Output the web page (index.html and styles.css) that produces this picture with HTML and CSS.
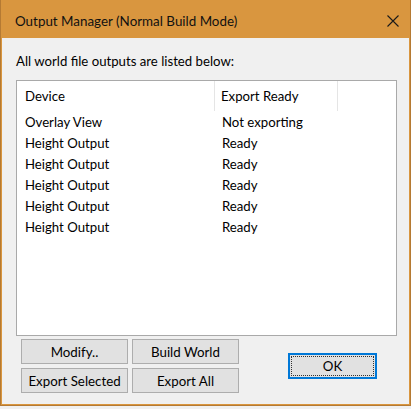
FILE: index.html
```html
<!DOCTYPE html>
<html>
<head>
<meta charset="utf-8">
<link rel="stylesheet" href="styles.css">
</head>
<body>
<div class="window">
  <div class="titlebar">
    <span class="title">Output Manager (Normal Build Mode)</span>
    <svg class="close" width="12" height="12" viewBox="0 0 12 12"><path d="M0.5 0.5 L11.5 11.5 M11.5 0.5 L0.5 11.5" stroke="#1a1a1a" stroke-width="1.1" fill="none"/></svg>
  </div>
  <div class="client">
    <div class="label">All world file outputs are listed below:</div>
    <div class="list">
      <div class="header">
        <div class="hcell c1">Device</div>
        <div class="hcell c2">Export Ready</div>
        <div class="hcell c3"></div>
      </div>
      <div class="row"><span class="c1">Overlay View</span><span class="c2">Not exporting</span></div>
      <div class="row"><span class="c1">Height Output</span><span class="c2">Ready</span></div>
      <div class="row"><span class="c1">Height Output</span><span class="c2">Ready</span></div>
      <div class="row"><span class="c1">Height Output</span><span class="c2">Ready</span></div>
      <div class="row"><span class="c1">Height Output</span><span class="c2">Ready</span></div>
      <div class="row"><span class="c1">Height Output</span><span class="c2">Ready</span></div>
    </div>
    <div class="actions">
      <div class="btngrid">
        <button class="btn">Modify..</button>
        <button class="btn">Build World</button>
        <button class="btn">Export Selected</button>
        <button class="btn">Export All</button>
      </div>
      <button class="btn ok"><span class="focus">OK</span></button>
    </div>
  </div>
</div>
</body>
</html>
```
FILE: styles.css
```css
html, body {
  margin: 0;
  padding: 0;
  background: #f0f0f0;
}
body {
  width: 411px;
  height: 409px;
  overflow: hidden;
  font-family: "Lato", "Noto Sans", sans-serif;
}
.window {
  width: 407px;
  height: 404px;
  border: 1px solid #b57a33;
  border-top: none;
  background: #d9963f;
  padding: 0 1px 1px 1px;
  display: flex;
  flex-direction: column;
}
.titlebar {
  height: 38px;
  display: flex;
  align-items: center;
  justify-content: space-between;
  padding: 4px 10px 0 13px;
  box-sizing: border-box;
  flex: none;
}
.title {
  font-size: 13.4px;
  color: #111;
}
.close {
  display: block;
}
.client {
  flex: 1;
  background: #f0f0f0;
  padding: 14px 0 0 14px;
  display: flex;
  flex-direction: column;
}
.label {
  font-size: 13.2px;
  color: #000;
  line-height: 18px;
  height: 18px;
  margin-bottom: 10px;
}
.list {
  width: 379px;
  height: 254px;
  border: 1px solid #a9a9a9;
  background: #fff;
  font-size: 13.2px;
  color: #000;
}
.header {
  display: flex;
  height: 30px;
}
.hcell {
  display: flex;
  align-items: center;
  box-sizing: border-box;
  border-right: 1px solid #e5e5e5;
  height: 30px;
}
.header .c1 { width: 198px; padding-left: 8px; }
.header .c2 { width: 123px; padding-left: 6px; }
.header .c3 { border-right: none; }
.row {
  display: flex;
  height: 21px;
  align-items: center;
}
.row .c1 { width: 198px; padding-left: 8px; box-sizing: border-box; }
.row .c2 { padding-left: 7px; }
.actions {
  display: flex;
  align-items: center;
  margin-top: 3px;
  padding-left: 5px;
}
.btngrid {
  display: grid;
  grid-template-columns: 107px 107px;
  grid-auto-rows: 25px;
  column-gap: 4px;
  row-gap: 4px;
}
.btn {
  font-family: "Lato", "Noto Sans", sans-serif;
  font-size: 13.3px;
  color: #000;
  background: #e1e1e1;
  border: 1px solid #adadad;
  padding: 0;
  margin: 0;
  height: 25px;
  display: flex;
  align-items: center;
  justify-content: center;
}
.ok {
  width: 89px;
  height: 26px;
  margin-left: 49px;
  border: 2px solid #0078d7;
  padding: 1px;
}
.focus {
  flex: 1;
  align-self: stretch;
  display: flex;
  align-items: center;
  justify-content: center;
  border: 1px dotted #333;
}
```
